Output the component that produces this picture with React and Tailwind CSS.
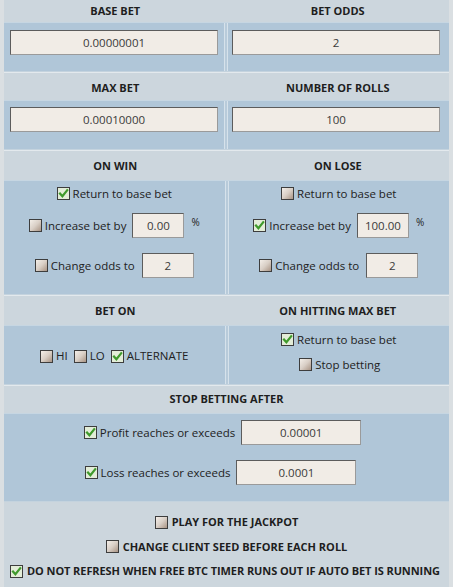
import React from "react";

const Check = ({ checked }) => (
  <span className="inline-flex w-[13px] h-[13px] shrink-0 border border-[#3d3d3d] bg-gradient-to-br from-[#f4efe9] via-[#d9cfc6] to-[#a99484] items-center justify-center">
    {checked && (
      <svg width="11" height="11" viewBox="0 0 11 11" className="bg-[#e3edd8] w-full h-full">
        <path d="M2 5.5 L4.4 8.2 L9.2 2.2" fill="none" stroke="#3f9a2c" strokeWidth="2.2" strokeLinecap="square" />
      </svg>
    )}
  </span>
);

const Field = ({ value, className }) => (
  <div
    className={`h-[25px] bg-[#f1ece6] border border-[#5c5c5c] border-r-[#9a9a9a] border-b-[#9a9a9a] flex items-center justify-center text-[11.5px] text-[#3a3a3a] ${className}`}
  >
    {value}
  </div>
);

const Option = ({ checked, label, className = "" }) => (
  <label className={`flex items-center gap-[3px] text-[11.5px] text-[#222] ${className}`}>
    <Check checked={checked} />
    <span>{label}</span>
  </label>
);

const Header = ({ left, right, className = "" }) => (
  <div className={`flex items-center bg-[#ccd6dd] border-t border-[#e3e9ed] font-bold text-[11px] text-[#1e1e1e] ${className}`}>
    <div className="flex-1 text-center">{left}</div>
    {right !== undefined && <div className="flex-1 text-center">{right}</div>}
  </div>
);

const Panel = ({ children, className = "" }) => (
  <div className={`flex bg-[#b0c6d8] border-t border-[#c6d6e2] border-b border-b-[#c4d3de] ${className}`}>
    {children}
  </div>
);

const Divider = () => (
  <div className="w-[4px] border-x border-[#d6e2eb] bg-[#b8cbda]" />
);

const BetSwitch = ({ ret, inc, incValue, odds }) => (
  <div className="flex-1 flex flex-col items-center pt-[4px]">
    <Option checked={ret} label="Return to base bet" />
    <div className="flex items-center mt-[11px]">
      <Option checked={inc} label="Increase bet by" />
      <Field value={incValue} className="w-[52px] ml-[6px]" />
      <span className="ml-[7px] text-[10px] text-[#222] -mt-[6px]">%</span>
    </div>
    <div className="flex items-center mt-[15px]">
      <Option checked={false} label="Change odds to" />
      <Field value={odds} className="w-[52px] ml-[7px]" />
    </div>
  </div>
);

export default function App() {
  return (
    <div
      className="w-[453px] h-[587px] bg-[#dadfe2] px-[4px] overflow-hidden"
      style={{ fontFamily: '"Open Sans", "Noto Sans", Arial, sans-serif' }}
    >
      <div className="bg-[#ccd6dd] h-full">
        <Header left="BASE BET" right="BET ODDS" className="h-[22px] border-t-0" />
        <Panel className="h-[50px]">
          <div className="flex-1 px-[6px] pt-[7px]">
            <Field value="0.00000001" />
          </div>
          <Divider />
          <div className="flex-1 px-[4px] pt-[7px] pr-[9px]">
            <Field value="2" />
          </div>
        </Panel>
        <Header left="MAX BET" right="NUMBER OF ROLLS" className="h-[28px] pt-[3px]" />
        <Panel className="h-[50px]">
          <div className="flex-1 px-[6px] pt-[6px]">
            <Field value="0.00010000" />
          </div>
          <Divider />
          <div className="flex-1 px-[4px] pt-[6px] pr-[9px]">
            <Field value="100" />
          </div>
        </Panel>
        <Header left="ON WIN" right="ON LOSE" className="h-[30px] pt-[2px]" />
        <Panel className="h-[115px]">
          <BetSwitch ret={true} inc={false} incValue="0.00" odds="2" />
          <Divider />
          <BetSwitch ret={false} inc={true} incValue="100.00" odds="2" />
        </Panel>
        <Header left="BET ON" right="ON HITTING MAX BET" className="h-[30px] pt-[2px]" />
        <Panel className="h-[60px]">
          <div className="flex-1 flex items-center justify-center gap-[6px] pt-[2px]">
            <Option checked={false} label="HI" className="text-[10.5px]" />
            <Option checked={false} label="LO" className="text-[10.5px]" />
            <Option checked={true} label="ALTERNATE" className="text-[10.5px]" />
          </div>
          <Divider />
          <div className="flex-1 flex flex-col items-center pt-[5px] gap-[8px]">
            <Option checked={true} label="Return to base bet" />
            <Option checked={false} label="Stop betting" className="ml-[2px]" />
          </div>
        </Panel>
        <Header left="STOP BETTING AFTER" className="h-[28px]" />
        <Panel className="h-[89px] flex-col items-center">
          <div className="flex items-center mt-[6px] ml-[-8px]">
            <Option checked={true} label="Profit reaches or exceeds" />
            <Field value="0.00001" className="w-[120px] ml-[6px]" />
          </div>
          <div className="flex items-center mt-[15px] ml-[-12px]">
            <Option checked={true} label="Loss reaches or exceeds" />
            <Field value="0.0001" className="w-[120px] ml-[6px]" />
          </div>
        </Panel>
        <div className="flex flex-col items-center pt-[12px] gap-[8px] font-bold text-[11px] text-[#1e1e1e]">
          <label className="flex items-center gap-[4px]">
            <Check checked={false} />
            <span>PLAY FOR THE JACKPOT</span>
          </label>
          <label className="flex items-center gap-[4px]">
            <Check checked={false} />
            <span>CHANGE CLIENT SEED BEFORE EACH ROLL</span>
          </label>
          <label className="flex items-center gap-[4px] self-start ml-[6px] tracking-[-0.08px]">
            <Check checked={true} />
            <span>DO NOT REFRESH WHEN FREE BTC TIMER RUNS OUT IF AUTO BET IS RUNNING</span>
          </label>
        </div>
      </div>
    </div>
  );
}
